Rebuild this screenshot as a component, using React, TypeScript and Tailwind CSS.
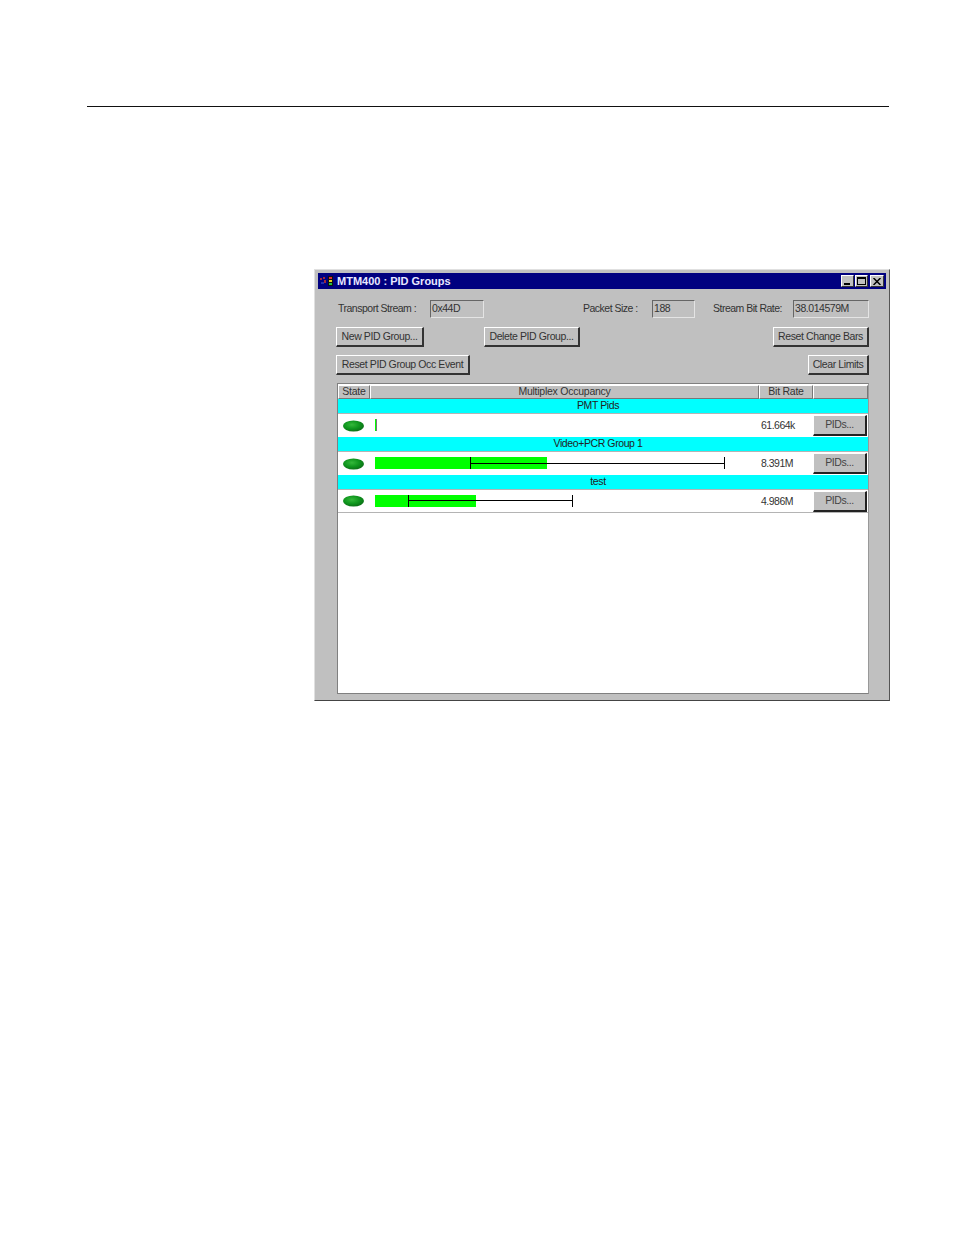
import React from 'react';

const font = "[font-family:'Liberation_Sans',Arial,sans-serif]";

const Btn = ({ label, w }: { label: string; w: string }) => (
  <div className={`${w} h-[20px] bg-[#c0c0c0] flex items-center justify-center text-[10.5px] tracking-[-0.4px] text-[#333] border-t border-l border-t-white border-l-white border-r-2 border-b-2 border-r-[#333] border-b-[#333] whitespace-nowrap`}>
    {label}
  </div>
);

const Field = ({ value, w }: { value: string; w: string }) => (
  <div className={`${w} h-[18px] flex items-center pl-[1px] text-[10.5px] tracking-[-0.45px] text-[#333] bg-[#c0c0c0] border-t border-l border-t-[#666] border-l-[#666] border-r border-b border-r-[#e4e4e4] border-b-[#e4e4e4] whitespace-nowrap`}>
    {value}
  </div>
);

const Label = ({ text, w }: { text: string; w: string }) => (
  <div className={`${w} text-[10.5px] tracking-[-0.5px] text-[#333] whitespace-nowrap`}>{text}</div>
);

const HeadCell = ({ label, w }: { label: string; w: string }) => (
  <div className={`${w} h-[14px] flex items-center justify-center bg-[#c0c0c0] text-[10.5px] tracking-[-0.25px] text-[#333] border-t border-l border-t-white border-l-white border-r border-b border-r-[#777] border-b-[#777] whitespace-nowrap`}>
    {label}
  </div>
);

const Led = () => (
  <svg width="21" height="12" viewBox="0 0 21 12" className="block">
    <defs>
      <radialGradient id="led" cx="0.42" cy="0.38" r="0.66">
        <stop offset="0" stopColor="#34b83a" />
        <stop offset="0.55" stopColor="#0f961e" />
        <stop offset="1" stopColor="#0b6c16" />
      </radialGradient>
    </defs>
    <ellipse cx="10.5" cy="6" rx="10.5" ry="5.5" fill="url(#led)" />
  </svg>
);

// left/right = limit marker span relative to the start of the bar track
const GroupRow = ({ name, fill, left, right, rate, last }: { name: string; fill: string; left?: string; right?: string; rate: string; last?: boolean }) => (
  <>
    <div className="h-[14px] bg-[#00ffff] flex items-center justify-center text-[10.5px] tracking-[-0.4px] text-[#222] pr-[10px] whitespace-nowrap">
      {name}
    </div>
    <div className={`h-[24px] flex items-center border-t border-t-[#b4b4b4] pb-px ${last ? 'border-b border-b-[#b4b4b4]' : ''}`}>
      <div className="w-[37px] pl-[5px] mt-[1px] shrink-0">
        <Led />
      </div>
      <div className="w-[386px] h-[12px] relative shrink-0">
        <div className={`${fill} h-full bg-[#00ff00]`} />
        {left && right ? (
          <div className={`absolute top-0 h-[12px] ${left} ${right} border-l border-r border-l-black border-r-black flex items-center`}>
            <div className="w-full h-px bg-black" />
          </div>
        ) : (
          <div className="absolute top-0 left-[1px] w-px h-[12px] bg-[#777]" />
        )}
      </div>
      <div className="w-[52px] mt-[2px] shrink-0 text-[10.5px] tracking-[-0.5px] text-[#333] whitespace-nowrap">{rate}</div>
      <div className="w-[54px] h-[21px] mt-[1px] shrink-0 bg-[#c0c0c0] flex items-center justify-center text-[10.5px] tracking-[-0.4px] text-[#444] border-t border-l border-t-white border-l-white border-r-2 border-b-2 border-r-[#222] border-b-[#222]">
        PIDs...
      </div>
    </div>
  </>
);

export default function App() {
  return (
    <div className={`w-[954px] h-[1235px] bg-white pt-[106px] pl-[87px] overflow-hidden ${font}`}>
      <div className="w-[802px] h-px bg-[#111]" />

      {/* PID Groups window */}
      <div className="ml-[227px] mt-[162px] w-[576px] h-[432px] bg-[#c0c0c0] p-[3px] border border-t-[#e0e0e0] border-l-[#e0e0e0] border-r-[#555] border-b-[#444] flex flex-col">
        <div className="h-[16px] shrink-0 bg-[#000080] flex items-center pl-[2px] pr-[2px]">
          <svg width="14" height="12" viewBox="0 0 14 12" className="block shrink-0">
            <rect x="0" y="3" width="2" height="2" fill="#a02838" />
            <rect x="3" y="2" width="2" height="2" fill="#a02838" />
            <rect x="1" y="7" width="3" height="2" fill="#2030b0" />
            <rect x="4" y="5" width="2" height="3" fill="#a02838" />
            <rect x="8" y="1" width="5" height="10" fill="#111" />
            <rect x="9" y="2" width="3" height="2" fill="#e03030" />
            <rect x="9" y="5" width="3" height="2" fill="#e8d020" />
            <rect x="9" y="8" width="3" height="2" fill="#20c040" />
          </svg>
          <span className="ml-[3px] text-[11px] font-bold text-[#e8e8ff] whitespace-nowrap">MTM400 : PID Groups</span>
          <div className="ml-auto flex items-center">
            {/* minimize */}
            <div className="w-[13px] h-[12px] bg-[#c0c0c0] border-t border-l border-t-white border-l-white border-r border-b border-r-[#333] border-b-[#333] flex items-end pl-[2px] pb-[1px]">
              <div className="w-[6px] h-[2px] bg-black" />
            </div>
            {/* maximize */}
            <div className="ml-[1px] w-[13px] h-[12px] bg-[#c0c0c0] border-t border-l border-t-white border-l-white border-r border-b border-r-[#333] border-b-[#333] flex items-center justify-center">
              <div className="w-[9px] h-[8px] border border-black border-t-2" />
            </div>
            {/* close */}
            <div className="ml-[2px] w-[14px] h-[12px] bg-[#c0c0c0] border-t border-l border-t-white border-l-white border-r border-b border-r-[#333] border-b-[#333] flex items-center justify-center">
              <svg width="8" height="7" viewBox="0 0 8 7" className="block">
                <path d="M0.5 0 L7.5 7 M7.5 0 L0.5 7" stroke="#000" strokeWidth="1.5" />
              </svg>
            </div>
          </div>
        </div>

        {/* stream info */}
        <div className="mt-[11px] ml-[20px] flex items-center">
          <Label text="Transport Stream :" w="w-[92px]" />
          <Field value="0x44D" w="w-[54px]" />
          <Label text="Packet Size :" w="w-[69px] ml-[99px]" />
          <Field value="188" w="w-[43px]" />
          <Label text="Stream Bit Rate:" w="w-[80px] ml-[18px]" />
          <Field value="38.014579M" w="w-[76px]" />
        </div>

        <div className="mt-[9px] ml-[18px] w-[533px] flex">
          <Btn label="New PID Group..." w="w-[88px]" />
          <div className="ml-[60px]">
            <Btn label="Delete PID Group..." w="w-[96px]" />
          </div>
          <div className="ml-auto">
            <Btn label="Reset Change Bars" w="w-[96px]" />
          </div>
        </div>

        <div className="mt-[8px] ml-[18px] w-[533px] flex justify-between">
          <Btn label="Reset PID Group Occ Event" w="w-[134px]" />
          <Btn label="Clear Limits" w="w-[61px]" />
        </div>

        {/* groups table */}
        <div className="mt-[8px] ml-[19px] w-[532px] h-[311px] bg-white border border-t-[#808080] border-l-[#808080] border-r-[#999] border-b-[#808080] pt-px">
          <div className="flex h-[14px]">
            <HeadCell label="State" w="w-[32px]" />
            <HeadCell label="Multiplex Occupancy" w="w-[389px]" />
            <HeadCell label="Bit Rate" w="w-[54px]" />
            <HeadCell label="" w="w-[55px]" />
          </div>
          <GroupRow name="PMT Pids" fill="w-[1px]" rate="61.664k" />
          <GroupRow name="Video+PCR Group 1" fill="w-[172px]" left="left-[95px]" right="right-[36px]" rate="8.391M" />
          <GroupRow name="test" fill="w-[101px]" left="left-[33px]" right="right-[188px]" rate="4.986M" last />
        </div>
      </div>
    </div>
  );
}
